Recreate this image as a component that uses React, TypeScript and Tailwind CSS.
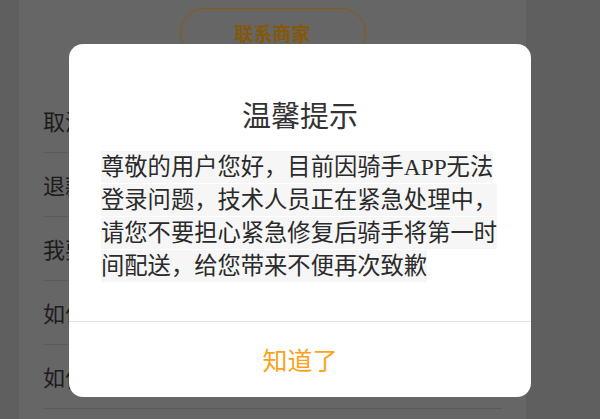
import React from "react";

const cjk = { fontFamily: '"Noto Sans CJK SC", "Noto Sans", sans-serif' };
const bodyFont = { fontFamily: '"Liberation Serif", "Noto Sans CJK SC", serif' };

const rows = ["取消订单", "退款问题", "我要投诉", "如何联系", "如何退款"];

const lines = [
  "尊敬的用户您好，目前因骑手APP无法",
  "登录问题，技术人员正在紧急处理中，",
  "请您不要担心紧急修复后骑手将第一时",
  "间配送，给您带来不便再次致歉",
];

export default function App() {
  return (
    <div className="relative w-[600px] h-[419px] overflow-hidden bg-[#5f5f5f]" style={cjk}>
      {/* dimmed page behind */}
      <div className="ml-[19px] w-[507px] h-full bg-[#666666] flex flex-col">
        <div className="h-[89px] flex justify-center pt-[8px]">
          <div className="w-[186px] h-[50px] rounded-full border-[1.5px] border-[#8a5a0a] flex items-center justify-center text-[19px] font-bold text-[#855708]">
            联系商家
          </div>
        </div>
        {rows.map((r) => (
          <div key={r} className="mx-[24px] h-[64px] border-b border-[#5a5a5a] flex items-center text-[22px] text-[#1c1c1c]">
            {r}
          </div>
        ))}
      </div>

      {/* modal */}
      <div className="absolute left-[69px] top-[44px] w-[462px] h-[353px] bg-white rounded-[14px] flex flex-col">
        <div className="pt-[50px] pb-[17px] text-center text-[29px] leading-[40px] text-[#333333]">温馨提示</div>
        <div className="px-[32px] pb-[39px] flex flex-col gap-[1px] text-[23.3px] leading-[32px] text-[#2a2a2a]" style={bodyFont}>
          {lines.map((l) => (
            <div key={l} className="w-fit h-[32px] whitespace-nowrap bg-[#f6f6f6]">
              {l}
            </div>
          ))}
        </div>
        <div className="flex-1 border-t border-[#e3e3e3] flex items-center justify-center text-[25px] text-[#fca21a]">
          知道了
        </div>
      </div>
    </div>
  );
}
